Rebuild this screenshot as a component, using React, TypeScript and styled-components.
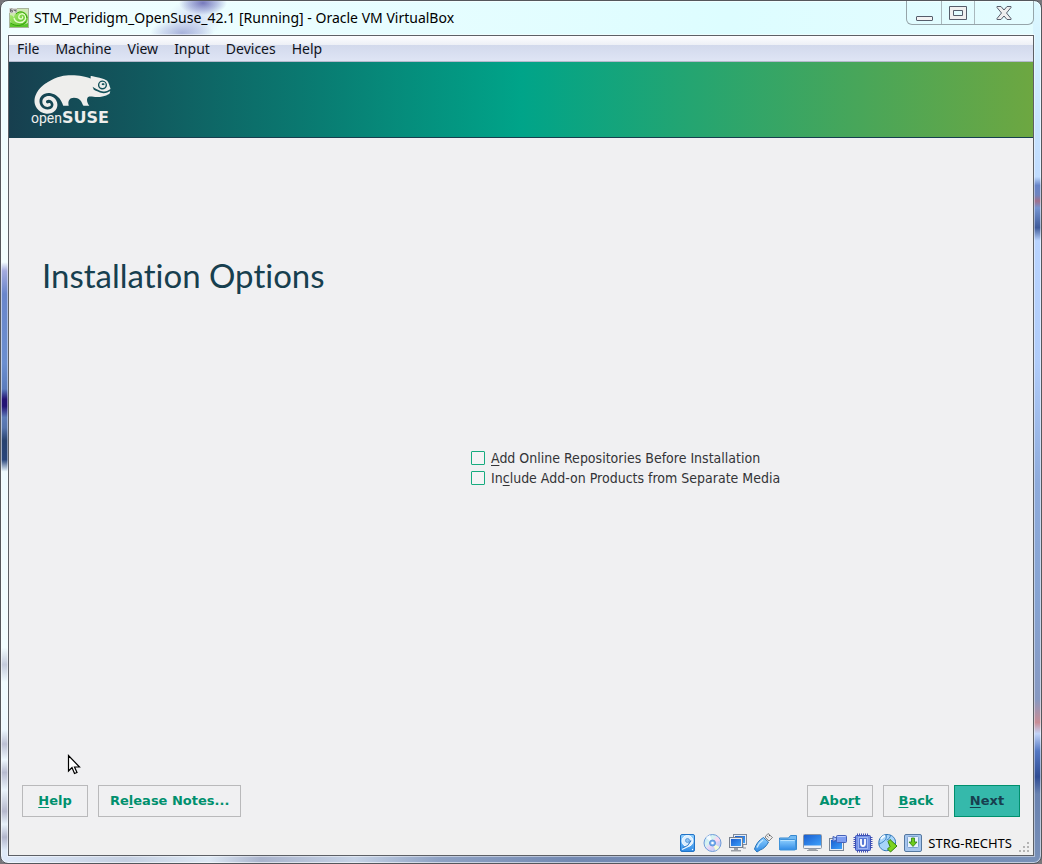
import React from "react";
import styled, { createGlobalStyle } from "styled-components";
import { FaSuse } from "react-icons/fa";

const GlobalStyle = createGlobalStyle`
  *, *::before, *::after { box-sizing: border-box; }
  body { margin: 0; background: #77757a; }
  button, input { font: inherit; margin: 0; }
`;

const uiFont = `"Noto Sans", "Open Sans", sans-serif`;
const wizardFont = `"DejaVu Sans", sans-serif`;

const Frame = styled.div`
  display: flex;
  flex-direction: column;
  min-height: 100vh;
  padding: 0 7px 7px;
  border: 1px solid #54575c;
  border-radius: 8px;
  font-family: ${uiFont};
  box-shadow: inset 0 0 0 1px rgba(255, 255, 255, 0.55);
  background:
    linear-gradient(90deg, #dfeafa 0%, #c5d0e2 12%, #dde8f4 20%, #a9b3cc 25%, #c6d3e6 34%, #8fa2c4 42%, #7389b2 55%, #7890b8 100%) bottom / 100% 8px no-repeat,
    linear-gradient(180deg, #ecfdff 0, #f4feff 30.3%, #a5abdf 31.3%, #6a86cb 34%, #6b8fd0 42%, #5b7cbd 45%, #241273 46.2%, #221274 47%, #5e7cb8 48.3%, #5674ac 49.5%, #28426f 51%, #29457a 53.2%, #eefaff 54.6%, #f2fdff 75%, #c4cbdc 77%, #f0fbff 79%, #edf8ff 84.5%, #bcc0d4 86.2%, #eef8ff 88%, #b7bbd0 89.5%, #eaf4fc 91.5%, #b5b8cd 94%, #e8f2fb 95.5%, #b2b6cc 97%, #dfeaf8 98.5%) left / 8px 100% no-repeat,
    linear-gradient(180deg, #ddf9ff 0, #c7e3ff 14%, #c0dcff 20.4%, #6784c8 21.4%, #6f84c0 22.5%, #a0708c 23.2%, #7595d2 24%, #3e5a9a 26.3%, #b9d4ff 27.8%, #b0ccfa 42%, #8eabdc 56%, #86a3d2 70%, #8799c2 81%, #c98d96 83.7%, #c2d4f8 85%, #5478c4 87%, #2f4c94 90%, #6982b0 92%, #7890b8 100%) right / 8px 100% no-repeat,
    linear-gradient(90deg, #f2feff, #ddfdff 70%, #e4fcff);
`;

const TitleBar = styled.header`
  display: flex;
  align-items: center;
  gap: 5px;
  height: 34px;
  padding-left: 1px;
  background:
    radial-gradient(ellipse 24px 12px at 195px 2px, rgba(98, 98, 176, 0.85), rgba(120, 125, 195, 0.45) 60%, transparent),
    radial-gradient(ellipse 32px 14px at 174px 32px, rgba(140, 148, 204, 0.7), rgba(170, 178, 222, 0.45) 60%, transparent),
    radial-gradient(ellipse 28px 20px at 187px 18px, rgba(200, 206, 238, 0.7), transparent);
`;

const Title = styled.h1`
  flex: 1;
  margin: 0;
  font-size: 14px;
  font-weight: 400;
  line-height: 20px;
  color: #000;
  white-space: nowrap;
`;

const WindowControls = styled.div`
  display: flex;
  align-self: flex-start;
  height: 24px;
  border: 1px solid #96a5aa;
  border-top: 0;
  border-radius: 0 0 6px 6px;
`;

const WindowButton = styled.button<{ $width: number }>`
  display: grid;
  place-items: center;
  width: ${(p) => p.$width}px;
  padding: 0;
  border: 0;
  background: none;
  & + & { border-left: 1px solid #a9b8bd; }
`;

const Client = styled.div`
  flex: 1;
  display: flex;
  flex-direction: column;
  border: 1px solid #5d6066;
  box-shadow: 0 0 0 1px rgba(255, 255, 255, 0.45);
`;

const MenuBar = styled.nav`
  display: flex;
  height: 26px;
  border-bottom: 1px solid #b4b9cc;
  background: linear-gradient(180deg, #fdfdff 0, #edf0f6 9px, #d2d9ec 9px, #dfe5f5 100%);
`;

const MenuItem = styled.button`
  padding: 0 8px;
  border: 0;
  background: none;
  font-size: 14px;
  line-height: 24px;
  color: #10131c;
`;

const Banner = styled.div`
  height: 76px;
  padding: 8px 20px 0;
  border-bottom: 1px solid #173f4f;
  background: linear-gradient(90deg, #173f4f 0, #00a489 50%, #6da741 100%);
`;

const Wizard = styled.main`
  flex: 1;
  display: flex;
  flex-direction: column;
  padding: 113px 13px 13px;
  background: #f0f0f2;
  font-family: ${wizardFont};
`;

const Heading = styled.h2`
  margin: 0 0 0 20px;
  font-family: Lato, sans-serif;
  font-size: 33px;
  font-weight: 400;
  font-variant-ligatures: none;
  line-height: 48px;
  color: #173f4f;
`;

const Spacer = styled.div<{ $grow: number }>`
  flex: ${(p) => p.$grow};
`;

const Options = styled.div`
  display: flex;
  flex-direction: column;
  margin-left: calc(50% - 50px);
`;

const Option = styled.label`
  display: flex;
  align-items: center;
  gap: 6px;
  height: 20px;
  font-family: "DejaVu Sans Condensed", "DejaVu Sans", sans-serif;
  font-size: 14px;
  color: #333437;
  white-space: nowrap;
`;

const CheckBox = styled.input`
  appearance: none;
  width: 14px;
  height: 14px;
  border: 1px solid #16ab7f;
  border-radius: 1px;
  background: #f3f3f5;
  &:checked { background: #35b9ab; }
`;

const Accel = styled.u`
  text-decoration-thickness: 1px;
  text-underline-offset: 2px;
  text-decoration-skip-ink: none;
`;

const Actions = styled.div`
  display: flex;
  justify-content: space-between;
`;

const ActionGroup = styled.div<{ $gap: number }>`
  display: flex;
  gap: ${(p) => p.$gap}px;
`;

const ActionButton = styled.button<{ $primary?: boolean }>`
  min-width: 66px;
  height: 32px;
  padding: 0 11px;
  border: 1px solid ${(p) => (p.$primary ? "#00906e" : "#b9b9bb")};
  background: ${(p) => (p.$primary ? "#35b9ab" : "#f0f0f2")};
  color: ${(p) => (p.$primary ? "#173f4f" : "#00906e")};
  font-size: 13px;
  font-weight: 700;
  line-height: 28px;
`;

const StatusBar = styled.footer`
  display: flex;
  align-items: center;
  justify-content: flex-end;
  gap: 5px;
  height: 25px;
  padding-right: 2px;
  background: #f0f0f0;
`;

const HostKey = styled.span`
  margin-right: 2px;
  font-size: 13px;
  color: #000;
`;

const Grip = styled.svg`
  align-self: flex-end;
`;

const Pointer = styled.svg`
  position: absolute;
  left: 67px;
  top: 754px;
  pointer-events: none;
`;

const MachineIcon = () => (
  <svg width="20" height="20" viewBox="0 0 20 20" aria-hidden="true">
    <defs>
      <linearGradient id="leaf" x1="0" y1="0" x2="1" y2="1">
        <stop offset="0" stopColor="#b4f078" />
        <stop offset="1" stopColor="#4cba1c" />
      </linearGradient>
    </defs>
    <rect x=".5" y=".5" width="19" height="19" fill="#cfe8b4" stroke="#a9b59c" />
    <path d="M1 7c2 0 3 1 4 3c0-6 6-8 10-6c5 2 5 9 1 12c-5 4-11 2-15-3z" fill="url(#leaf)" />
    <path d="M1 14c5 5 12 4 18 1v4H1z" fill="#5cc62c" />
    <path d="M5 10c1 5 8 6 11 2c2-4-1-7-4-6c-3 1-3 5 0 5c2 0 2-2 1-2.500" fill="none" stroke="#e9ffcf" strokeWidth="1.300" />
    <path d="M7 6c4-4 10-2 11 4M2 15c5 4 11 3 15-1" fill="none" stroke="#38a30d" strokeWidth="1" />
    <path d="M0 0h8v5H0z" fill="#dcdcd8" />
    <path d="M3.500 1H1.500v3H3.500V2.500H1.500M5 1v1.500h2M7 1v3.500" fill="none" stroke="#5d5d5d" strokeWidth=".8" />
  </svg>
);

const Logo = () => (
  <svg width="86" height="62" viewBox="0 0 86 62" role="img" aria-label="openSUSE">
    <FaSuse x="5" y="-14" size={77} color="#eeeeec" />
    <text x="2" y="53" fill="#eeeeec" fontFamily="Roboto, sans-serif" fontSize="14">open</text>
    <text x="33" y="53" fill="#eeeeec" fontFamily="DejaVu Sans, sans-serif" fontWeight="700" fontSize="16">SUSE</text>
  </svg>
);

const StatusDefs = () => (
  <svg width="0" height="0" aria-hidden="true">
    <defs>
      <linearGradient id="blue" x1="0" y1="0" x2="0" y2="1">
        <stop offset="0" stopColor="#8fd0ff" />
        <stop offset="1" stopColor="#2f8be6" />
      </linearGradient>
      <linearGradient id="screen" x1="0" y1="0" x2="1" y2="1">
        <stop offset="0" stopColor="#1a5fd0" />
        <stop offset="1" stopColor="#3da0fa" />
      </linearGradient>
      <linearGradient id="disc" x1="0" y1="0" x2="1" y2="1">
        <stop offset="0" stopColor="#b9dcff" />
        <stop offset=".35" stopColor="#d8f5f0" />
        <stop offset=".55" stopColor="#e9d3f5" />
        <stop offset="1" stopColor="#9cc8f5" />
      </linearGradient>
    </defs>
  </svg>
);

const Icon = ({ children }: { children: React.ReactNode }) => (
  <svg width="20" height="20" viewBox="0 0 20 20" aria-hidden="true">{children}</svg>
);

const StatusIcons = () => (
  <>
    <Icon>
      <rect x="2.500" y="1.500" width="14" height="17" rx="1.500" fill="url(#blue)" stroke="#2173c6" />
      <circle cx="9.500" cy="8" r="5.500" fill="#dceefd" stroke="#f6fbff" />
      <circle cx="9.500" cy="7.500" r="2" fill="#8fc3f2" stroke="#4a90d8" strokeWidth=".8" />
      <path d="M5 15l5-2.500l3-5" fill="none" stroke="#2f78c4" strokeWidth="1.300" />
      <path d="M4 16.500l6-3l4-5" fill="none" stroke="#eef7ff" strokeWidth="1.200" />
      <circle cx="14.500" cy="16.500" r=".7" fill="#fff" />
    </Icon>
    <Icon>
      <circle cx="9.500" cy="10" r="8.500" fill="url(#disc)" stroke="#6f9bd8" />
      <path d="M9.500 10L3 5a8 8 0 0 1 4-3z" fill="#f4fbff" />
      <path d="M9.500 10l3 7.500a8 8 0 0 0 4-3.500z" fill="#f3fbd9" />
      <path d="M9.500 10L17 7.500a8 8 0 0 0-3-4z" fill="#f8d8ee" />
      <circle cx="9.500" cy="10" r="3" fill="#78b0ee" stroke="#4a86d6" strokeWidth=".8" />
      <circle cx="9.500" cy="10" r="1.300" fill="#fff" />
    </Icon>
    <Icon>
      <rect x="5.500" y="1.500" width="13" height="10" fill="#e7edf5" stroke="#7e8a9c" />
      <rect x="7" y="3" width="10" height="7" fill="url(#screen)" />
      <path d="M15 12v3h3" stroke="#8c929c" fill="none" />
      <rect x="1.500" y="4.500" width="13" height="10" fill="#e7edf5" stroke="#77808e" />
      <rect x="3" y="6" width="10" height="7" fill="url(#screen)" />
      <path d="M6 15h4v2h3v1.500H3V17h3z" fill="#9b9fa6" />
    </Icon>
    <Icon>
      <path d="M12 4l3-3.500l4.500 4L16 8z" fill="#ececec" stroke="#777" strokeWidth=".9" />
      <path d="M14.500 3.500l.8.700M16 2l1 .8" stroke="#444" />
      <path d="M10.500 4.500l5 4.500c-2 4-5 7-8.500 8l-3 2-1.500-1.500L1.500 16C3 11 6 7 10.500 4.500z" fill="url(#blue)" stroke="#2b75b8" />
      <path d="M10 7c-3 2-5 5-6 7.500" stroke="#c5e8ff" fill="none" strokeWidth="1.500" />
    </Icon>
    <Icon>
      <path d="M1.500 16.500V5h9l2-2.500h6v14z" fill="#71b9f2" stroke="#3688cf" />
      <rect x="1.500" y="6.500" width="16" height="10.500" rx=".8" fill="url(#blue)" stroke="#3f93da" />
      <path d="M2.500 7.500h14" stroke="#b9e3ff" />
    </Icon>
    <Icon>
      <rect x=".5" y="1.500" width="18" height="14" rx="1" fill="#eef1f5" stroke="#8894a5" />
      <rect x="1" y="2" width="17" height="10.500" fill="url(#screen)" />
      <path d="M6 16h7v1.500H6zM4 17.500h11" stroke="#9a9fa5" fill="#aaa" />
    </Icon>
    <Icon>
      <rect x="1.500" y="5.500" width="14" height="12" fill="#e8edf4" stroke="#7b8694" />
      <rect x="3" y="7" width="11" height="9" fill="url(#screen)" />
      <rect x="8.500" y="2.500" width="10" height="7" rx="1" fill="#7d9df0" stroke="#4461b8" />
      <path d="M8.500 5L5 3.500v5L8.500 7z" fill="#a9c2fa" stroke="#4461b8" />
      <path d="M9.500 3.500h8" stroke="#bfd0ff" />
    </Icon>
    <Icon>
      <path d="M4.500 .5v19M6.500 .5v19M8.500 .5v19M10.500 .5v19M12.500 .5v19M14.500 .5v19M.5 4.500h19M.5 6.500h19M.5 8.500h19M.5 10.500h19M.5 12.500h19M.5 14.500h19" stroke="#4353b4" strokeWidth="1" />
      <rect x="2.500" y="2.500" width="15" height="15" rx="1" fill="#7593e6" stroke="#3c50b5" />
      <rect x="5.500" y="4.500" width="9" height="11" fill="#5577d4" stroke="#9db4f2" />
      <path d="M8 6v4.500q0 2.500 2 2.500t2-2.500V6" stroke="#fff" strokeWidth="1.800" fill="none" />
    </Icon>
    <Icon>
      <path d="M9 1.500C3.500 1.500 0 6 1 12c1 4 5 6.500 9 5.500c5-1 8-5 7.500-9C17 4 13 1.500 9 1.500z" fill="#a8d5fa" stroke="#2f74b4" />
      <path d="M8 2c1 3 0 6-7 9M8.500 7c2 0 4-3 4-5" stroke="#387fc0" fill="none" />
      <path d="M3 6q2-3 4-3" stroke="#f2fbff" strokeWidth="1.800" fill="none" />
      <path d="M10 8.500l2-2l7 6.500l-6.500 6l-3-3l2.500-2.500z" fill="#7bd321" stroke="#33800b" />
    </Icon>
    <Icon>
      <rect x="1.500" y="1.500" width="17" height="17" rx="1.500" fill="#a6c6ee" stroke="#55789f" />
      <rect x="4.500" y="3.500" width="11" height="11" rx="1" fill="#e8f2fd" stroke="#7ea3cf" />
      <path d="M8.500 5h3v4h2.500l-4 4.500L6 9h2.500z" fill="#6dcc1b" stroke="#2f7d10" strokeWidth=".8" />
    </Icon>
  </>
);

const menus = ["File", "Machine", "View", "Input", "Devices", "Help"];

export default function App() {
  return (
    <>
      <GlobalStyle />
      <Frame>
        <TitleBar>
          <MachineIcon />
          <Title>STM_Peridigm_OpenSuse_42.1 [Running] - Oracle VM VirtualBox</Title>
          <WindowControls>
            <WindowButton $width={34} aria-label="Minimize">
              <svg width="18" height="20" viewBox="0 0 18 20">
                <rect x="1.500" y="13.500" width="16" height="4" rx=".5" fill="#f3f3f3" stroke="#565d6b" />
              </svg>
            </WindowButton>
            <WindowButton $width={33} aria-label="Maximize">
              <svg width="18" height="20" viewBox="0 0 18 20">
                <path d="M.5 3.500h17v13H.5zM4.500 7.500v5h9v-5z" fill="#f0f0f0" fillRule="evenodd" stroke="#565d6b" />
              </svg>
            </WindowButton>
            <WindowButton $width={59} aria-label="Close">
              <svg width="16" height="20" viewBox="0 0 16 20">
                <path d="M1 3.500h4L8 7l3-3.500h4v1L10.500 10l4.500 5.500v1h-4L8 13l-3 3.500H1v-1L5.500 10L1 4.500z" fill="#eee" stroke="#565d6b" strokeLinejoin="round" />
              </svg>
            </WindowButton>
          </WindowControls>
        </TitleBar>
        <Client>
          <MenuBar>
            {menus.map((name) => (
              <MenuItem key={name}>{name}</MenuItem>
            ))}
          </MenuBar>
          <Banner>
            <Logo />
          </Banner>
          <Wizard>
            <Heading>Installation Options</Heading>
            <Spacer $grow={1} />
            <Options>
              <Option>
                <CheckBox type="checkbox" />
                <span><Accel>A</Accel>dd Online Repositories Before Installation</span>
              </Option>
              <Option>
                <CheckBox type="checkbox" />
                <span>In<Accel>c</Accel>lude Add-on Products from Separate Media</span>
              </Option>
            </Options>
            <Spacer $grow={2} />
            <Actions>
              <ActionGroup $gap={10}>
                <ActionButton><Accel>H</Accel>elp</ActionButton>
                <ActionButton>Re<Accel>l</Accel>ease Notes...</ActionButton>
              </ActionGroup>
              <ActionGroup $gap={5}>
                <ActionGroup $gap={10}>
                  <ActionButton>Abo<Accel>r</Accel>t</ActionButton>
                  <ActionButton><Accel>B</Accel>ack</ActionButton>
                </ActionGroup>
                <ActionButton $primary><Accel>N</Accel>ext</ActionButton>
              </ActionGroup>
            </Actions>
          </Wizard>
          <StatusBar>
            <StatusDefs />
            <StatusIcons />
            <HostKey>STRG-RECHTS</HostKey>
            <Grip width="12" height="13" viewBox="0 0 12 13" aria-hidden="true">
              <path d="M8 0h2v2H8zM4 4h2v2H4zM8 4h2v2H8zM0 8h2v2H0zM4 8h2v2H4zM8 8h2v2H8z" fill="#b4b4b4" />
            </Grip>
          </StatusBar>
        </Client>
      </Frame>
      <Pointer width="14" height="21" viewBox="0 0 14 21" aria-hidden="true">
        <path d="M1.500 1.500v15.500l3.500-3.500l2.500 6l2.500-1l-2.500-5.500h5z" fill="#fff" stroke="#000" strokeWidth="1.200" />
      </Pointer>
    </>
  );
}
